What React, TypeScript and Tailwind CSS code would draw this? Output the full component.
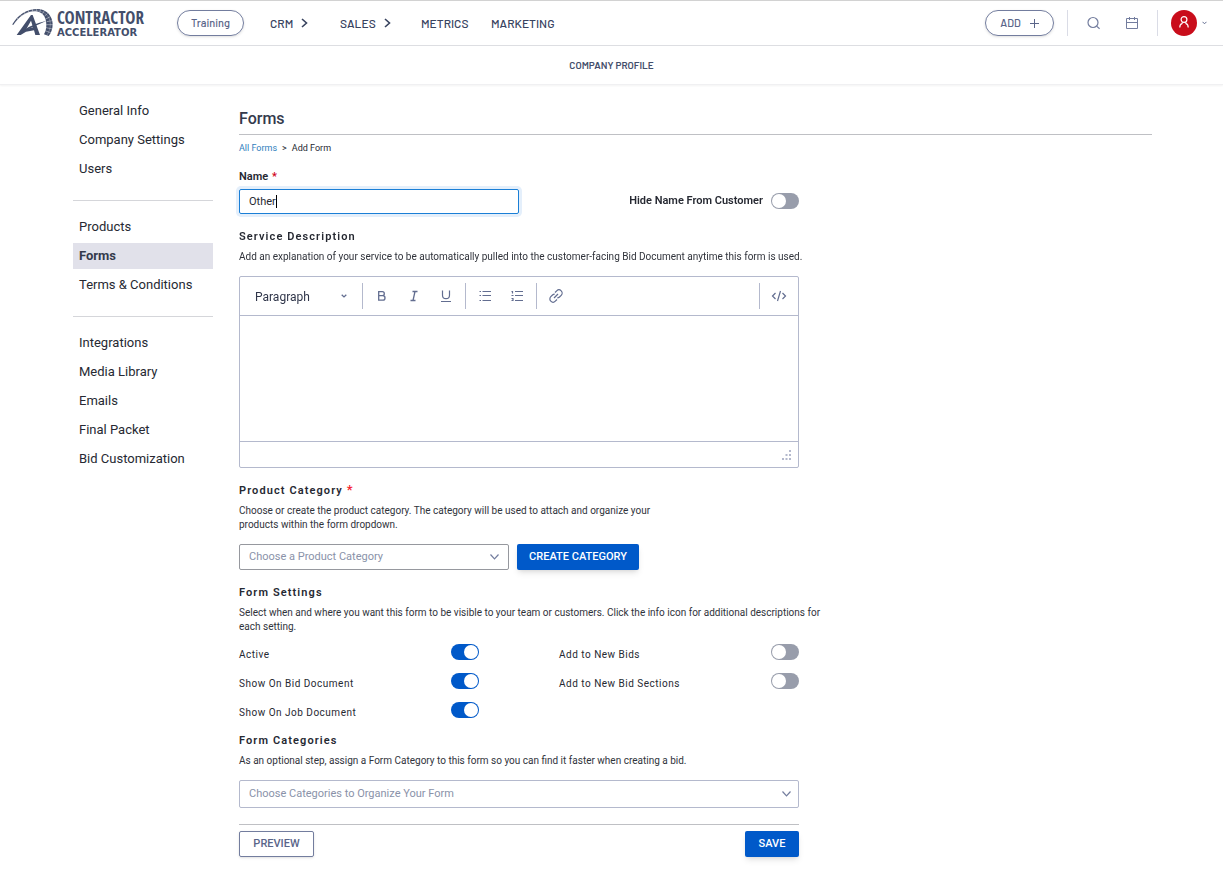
import { useEffect, useRef, useState } from 'react';
import type { ReactNode } from 'react';

function Logo() {
  return (
    <a href="#home" aria-label="Contractor Accelerator" className="flex w-[133px] shrink-0 items-start gap-[3px] text-[#434e6b]">
      <svg width="42" height="29" viewBox="0 0 126 87" fill="none" aria-hidden="true" className="shrink-0">
        <path
          d="M1 49C18 20 45 3 76 3c28 0 46 22 46 45 0 14-4 27-12 36l-14-5c5-9 7-19 7-29 0-25-13-38-31-40C45 8 22 25 3 52Z"
          fill="currentColor"
        />
        <path d="M9 44C25 21 47 8 74 8c25 1 41 18 41 41 0 12-4 24-10 32" stroke="#fff" strokeWidth="2" strokeOpacity=".35" />
        <path
          d="M14 28l5 7M25 19l4 7M36 11l4 8M48 6l3 8M61 3l1 8M74 1v9M86 3l-3 10M97 8l-6 10M107 16l-10 9M115 26l-14 7M121 38l-17 3M124 50h-21M122 63l-20-4M118 75l-19-7"
          stroke="#fff"
          strokeWidth="2.5"
          strokeOpacity=".5"
        />
        <path d="M57 21L14 81h12l16-10 24-4 4 14h14L62 21Zm0 17l6 20-20 5Z" fill="currentColor" fillRule="evenodd" />
        <path d="M22 76C45 56 75 45 104 38C78 50 50 62 22 76Z" fill="currentColor" />
      </svg>
      <span className="flex flex-col">
        <span className="font-['Noto_Sans_ExtraCondensed','Open_Sans_Condensed','Roboto_Condensed','Liberation_Sans_Narrow','Roboto',sans-serif] text-[17px] font-bold leading-5">
          CONTRACTOR
        </span>
        <span className="font-['DejaVu_Sans',sans-serif] text-[10px] leading-[10px] font-bold">ACCELERATOR</span>
      </span>
    </a>
  );
}

function Chevron({ className, d, width, height }: { className?: string; d: string; width: number; height: number }) {
  return (
    <svg
      width={width}
      height={height}
      viewBox={`0 0 ${width} ${height}`}
      fill="none"
      stroke="currentColor"
      className={className}
      aria-hidden="true"
    >
      <path d={d} />
    </svg>
  );
}

function NavItem({ label, menu }: { label: string; menu?: boolean }) {
  return (
    <a href={`#${label.toLowerCase()}`} className="flex items-center gap-2 text-[12px] font-medium text-[#38435f]">
      {label}
      {menu && <Chevron width={7} height={10} d="M1 1l4.5 4L1 9" className="stroke-[1.6]" />}
    </a>
  );
}

function Header() {
  return (
    <header className="flex h-[46px] items-center border-y border-t-[#d2d2d2] border-b-[#dddee2] pr-4 pl-3 font-['Barlow','Roboto',sans-serif]">
      <Logo />
      <button
        type="button"
        className="ml-8 h-[26px] w-[67px] rounded-full border border-[#737d9e] text-[11px] font-medium text-[#5a6589] shadow-sm"
      >
        Training
      </button>
      <nav className="ml-[26px] flex items-center">
        <div className="w-[70px]">
          <NavItem label="CRM" menu />
        </div>
        <div className="w-[81px]">
          <NavItem label="SALES" menu />
        </div>
        <div className="w-[70px]">
          <NavItem label="METRICS" />
        </div>
        <NavItem label="MARKETING" />
      </nav>
      <div className="ml-auto flex items-center">
        <button
          type="button"
          className="flex h-[26px] w-[69px] items-center justify-center gap-[9px] rounded-full border border-[#737d9e] text-[11px] font-medium text-[#5a6589] shadow-sm"
        >
          ADD
          <svg width="9" height="9" viewBox="0 0 9 9" stroke="currentColor" aria-hidden="true">
            <path d="M4.500 0v9M0 4.500h9" />
          </svg>
        </button>
        <span className="ml-[13px] h-[26px] w-px bg-[#dadce6]" />
        <button type="button" aria-label="Search" className="ml-[19px] text-[#737d9e]">
          <svg width="14" height="14" viewBox="0 0 14 14" fill="none" stroke="currentColor" strokeWidth="1.200" aria-hidden="true">
            <circle cx="6" cy="6.500" r="5" />
            <path d="M9.600 10.100l3 2.700" />
          </svg>
        </button>
        <button type="button" aria-label="Calendar" className="ml-[25px] text-[#737d9e]">
          <svg width="12" height="13" viewBox="0 0 12 13" fill="none" stroke="currentColor" aria-hidden="true">
            <path d="M.5 1.500h11v10H.5zM.5 5.500h11M3.500 0v3M8.500 0v3" />
          </svg>
        </button>
        <span className="ml-[19px] h-[26px] w-px bg-[#dadce6]" />
        <button type="button" aria-label="Account" className="ml-[13px] flex items-center gap-[5px] text-[#626d90]">
          <span className="flex size-[26px] items-center justify-center rounded-full bg-[#c90d1b] pb-[2px] text-white">
            <svg width="10" height="12" viewBox="0 0 10 12" fill="none" stroke="currentColor" strokeWidth="1.200" aria-hidden="true">
              <circle cx="5" cy="3.500" r="2.900" />
              <path d="M3.500 6.200L3 7.600Q.8 8.200.8 11.400M6.500 6.200l.5 1.400Q9.200 8.200 9.200 11.400" />
            </svg>
          </span>
          <Chevron width={5} height={4} d="M.5.800l2 2 2-2" />
        </button>
      </div>
    </header>
  );
}

const menuGroups = [
  ['General Info', 'Company Settings', 'Users'],
  ['Products', 'Forms', 'Terms & Conditions'],
  ['Integrations', 'Media Library', 'Emails', 'Final Packet', 'Bid Customization'],
];

function Sidebar() {
  return (
    <nav aria-label="Company profile" className="w-[140px] shrink-0 pt-[13px]">
      {menuGroups.map((group, i) => (
        <ul
          key={group[0]}
          className={`flex flex-col gap-[3px] ${i > 0 ? 'mt-[18px] border-t border-[#d5d6da] pt-[13px]' : ''}`}
        >
          {group.map((item) => (
            <li key={item}>
              <a
                href="#settings"
                className={`block px-[6px] text-[13px] leading-[26px] whitespace-nowrap ${
                  item === 'Forms' ? 'bg-[#e1e1ea] font-bold text-[#343a4c]' : 'text-[#262932]'
                }`}
              >
                {item}
              </a>
            </li>
          ))}
        </ul>
      ))}
    </nav>
  );
}

function Toggle({ id, on }: { id: string; on?: boolean }) {
  return (
    <input
      id={id}
      type="checkbox"
      role="switch"
      defaultChecked={on}
      className="flex h-4 w-7 shrink-0 cursor-pointer appearance-none items-center rounded-full bg-[#989dab] p-px before:size-[14px] before:rounded-full before:bg-white before:content-[''] checked:justify-end checked:bg-[#0059c9]"
    />
  );
}

function Setting({ id, label, on }: { id: string; label: string; on?: boolean }) {
  return (
    <div className="flex h-4 w-60 items-start justify-between">
      <label htmlFor={id} className="pt-[3px] text-[10px] leading-4 tracking-wider">
        {label}
      </label>
      <Toggle id={id} on={on} />
    </div>
  );
}

function SectionTitle({ children }: { children: ReactNode }) {
  return <h2 className="mt-4 text-[11px] leading-[14px] font-semibold tracking-widest text-[#262932]">{children}</h2>;
}

function Hint({ children, className = '' }: { children: ReactNode; className?: string }) {
  return <p className={`mt-[6px] text-[10px] leading-[14px] text-[#30333b] ${className}`}>{children}</p>;
}

function ToolButton({ label, children }: { label: string; children: ReactNode }) {
  return (
    <button type="button" aria-label={label} className="flex h-[26px] w-8 items-center justify-center">
      <svg width="16" height="16" viewBox="0 0 16 16" fill="none" stroke="currentColor" strokeWidth="1.200" aria-hidden="true">
        {children}
      </svg>
    </button>
  );
}

function Editor() {
  return (
    <div className="mt-3 rounded-[2px] border border-[#b4b9cd]">
      <div className="flex h-[39px] items-center border-b border-[#b4b9cd] text-[#626d90]">
        <div className="grid w-[122px] items-center">
          <select
            aria-label="Block format"
            className="col-start-1 row-start-1 h-[26px] w-full appearance-none bg-transparent pt-[2px] pl-[15px] text-[12px] text-[#30364a]"
          >
            <option>Paragraph</option>
          </select>
          <Chevron
            width={6}
            height={4}
            d="M.7.700l2.300 2.200L5.300.700"
            className="pointer-events-none col-start-1 row-start-1 mr-[15px] justify-self-end stroke-[1.3]"
          />
        </div>
        <div className="flex border-l border-[#b4b9cd] px-[3px]">
          <ToolButton label="Bold">
            <path d="M4.700 3.700h3.600a2 2 0 010 4H4.700zM4.700 7.700h4.100a2.200 2.200 0 010 4.400H4.700z" strokeWidth="1.300" />
          </ToolButton>
          <ToolButton label="Italic">
            <path d="M6.500 3.500h5M4.500 12.500h5M9 3.500l-2 9" strokeWidth="1.300" />
          </ToolButton>
          <ToolButton label="Underline">
            <path d="M4.500 2.500v4.700a3.500 3.500 0 007 0V2.500M3 13.500h10" />
          </ToolButton>
        </div>
        <div className="flex border-l border-[#b4b9cd] px-[3px]">
          <ToolButton label="Bulleted list">
            <path d="M5.500 3.500H14M5.500 7.500H14M5.500 12.500H14M2.500 3.500H4M2.500 7.500H4M2.500 12.500H4" />
          </ToolButton>
          <ToolButton label="Numbered list">
            <path d="M6 3.500h8M6 7.500h8M6 12.500h8M2.500 3.500H3.500v2M2.500 7.500H4.500M2.500 10.500h1.500v2H2.500" />
          </ToolButton>
        </div>
        <div className="flex border-l border-[#b4b9cd] px-[3px]">
          <ToolButton label="Link">
            <path d="M6 10l4-4" />
            <path d="M7 4.500l1.700-1.700a3.150 3.150 0 014.500 4.500l-1.700 1.700a3.100 3.100 0 01-2.200.9M9 11.500l-1.700 1.700a3.150 3.150 0 01-4.500-4.500l1.700-1.700a3.100 3.100 0 012.200-.9" />
          </ToolButton>
        </div>
        <div className="ml-auto flex border-l border-[#b4b9cd] px-[3px]">
          <ToolButton label="Source code">
            <path d="M4.500 5l-3 3 3 3M11.500 5l3 3-3 3M9.500 3l-3 10" />
          </ToolButton>
        </div>
      </div>
      <textarea aria-label="Service Description" className="block h-[125px] w-full resize-none px-4 py-3 text-[11px] outline-none" />
      <div className="flex h-[26px] items-center justify-end border-t border-[#b4b9cd] pr-[7px] text-[#b4b9cd]">
        <svg width="9" height="10" viewBox="0 0 9 10" fill="currentColor" aria-hidden="true">
          <path d="M7 0h2v2H7zM3.500 4h2v2h-2zM7 4h2v2H7zM0 8h2v2H0zM3.500 8h2v2h-2zM7 8h2v2H7z" />
        </svg>
      </div>
    </div>
  );
}

function Dropdown({ label, className, arrow }: { label: string; className: string; arrow: string }) {
  return (
    <div className="grid items-center">
      <select
        aria-label={label}
        className={`col-start-1 row-start-1 appearance-none rounded-[2px] border bg-white pl-[9px] text-[11px] text-[#8a92a9] ${className}`}
      >
        <option>{label}</option>
      </select>
      <Chevron
        width={9}
        height={6}
        d="M.5.500l4 4.300 4-4.300"
        className={`pointer-events-none col-start-1 row-start-1 justify-self-end stroke-[1.2] text-[#737d9e] ${arrow}`}
      />
    </div>
  );
}

function NameField() {
  const ref = useRef<HTMLInputElement>(null);
  const [touched, setTouched] = useState(false);
  useEffect(() => {
    const input = ref.current;
    if (input) {
      input.focus();
      input.setSelectionRange(input.value.length, input.value.length);
    }
  }, []);
  return (
    <div className="w-[280px]">
      <label htmlFor="name" className="block text-[11px] leading-[14px] font-semibold">
        Name <span className="ml-px text-[#d0021b]">*</span>
      </label>
      <div className="mt-[5px] grid items-center">
        <input
          ref={ref}
          id="name"
          defaultValue="Other"
          onKeyDown={() => setTouched(true)}
          onPointerDown={() => setTouched(true)}
          className={`col-start-1 row-start-1 h-[25px] w-full rounded-[2px] border border-[#1b7fd6] px-[9px] text-[11px] shadow-[0_0_0_3px_#e4effb] outline-none ${
            touched ? '' : 'caret-transparent'
          }`}
        />
        {!touched && (
          <span aria-hidden="true" className="pointer-events-none col-start-1 row-start-1 ml-[37px] h-[13px] w-px bg-black" />
        )}
      </div>
    </div>
  );
}

export default function App() {
  return (
    <div className="min-h-screen bg-white font-['Roboto',sans-serif] text-[#262932]">
      <Header />
      <div className="flex h-[39px] items-center justify-center border-b border-[#f0f0f2] font-['Barlow','Roboto',sans-serif] text-[10px] font-semibold text-[#434e6b] shadow-xs">
        <a href="#profile">COMPANY PROFILE</a>
      </div>
      <div className="flex gap-[26px] pr-[71px] pl-[73px]">
        <Sidebar />
        <main className="min-w-0 flex-1 pt-6 pb-[18px]">
          <h1 className="border-b border-[#bfc0c4] pb-[5px] text-[16px] leading-5 font-medium text-[#343a4c]">Forms</h1>
          <div className="mt-[6px] flex gap-[5px] text-[9px] leading-[14px]">
            <a href="#forms" className="text-[#2f80bd]">
              All Forms
            </a>
            <span>&gt;</span>
            <span>Add Form</span>
          </div>
          <form className="mt-[15px]" onSubmit={(e) => e.preventDefault()}>
            <div className="flex max-w-[560px] items-end justify-between">
              <NameField />
              <div className="flex h-[26px] items-center gap-2">
                <label htmlFor="hide-name" className="text-[11px] font-semibold">
                  Hide Name From Customer
                </label>
                <Toggle id="hide-name" />
              </div>
            </div>

            <section className="max-w-[590px]">
              <SectionTitle>Service Description</SectionTitle>
              <Hint>
                Add an explanation of your service to be automatically pulled into the customer-facing Bid Document anytime this form is
                used.
              </Hint>
            </section>
            <div className="max-w-[560px]">
              <Editor />
            </div>

            <section className="max-w-[590px]">
              <SectionTitle>
                Product Category <span className="text-[13px] leading-[10px] text-[#f5222d]">*</span>
              </SectionTitle>
              <Hint className="max-w-[420px]">
                Choose or create the product category. The category will be used to attach and organize your products within the form
                dropdown.
              </Hint>
            </section>
            <div className="mt-3 flex gap-2">
              <Dropdown label="Choose a Product Category" className="h-[26px] w-[270px] border-[#96989e]" arrow="mr-[10px]" />
              <button
                type="button"
                className="h-[26px] w-[122px] rounded-[2px] bg-[#0059c9] text-[11px] font-medium text-white shadow-md"
              >
                CREATE CATEGORY
              </button>
            </div>

            <section className="max-w-[590px]">
              <SectionTitle>Form Settings</SectionTitle>
              <Hint>
                Select when and where you want this form to be visible to your team or customers. Click the info icon for additional
                descriptions for each setting.
              </Hint>
            </section>
            <div className="mt-[10px] flex max-w-[560px] justify-between">
              <div className="flex flex-col gap-[13px]">
                <Setting id="active" label="Active" on />
                <Setting id="bid-doc" label="Show On Bid Document" on />
                <Setting id="job-doc" label="Show On Job Document" on />
              </div>
              <div className="flex flex-col gap-[13px]">
                <Setting id="new-bids" label="Add to New Bids" />
                <Setting id="new-sections" label="Add to New Bid Sections" />
              </div>
            </div>

            <section className="max-w-[590px]">
              <SectionTitle>Form Categories</SectionTitle>
              <Hint className="mb-3">
                As an optional step, assign a Form Category to this form so you can find it faster when creating a bid.
              </Hint>
            </section>
            <div className="max-w-[560px]">
              <Dropdown label="Choose Categories to Organize Your Form" className="h-7 w-full border-[#b4b9cd]" arrow="mr-[8px]" />
              <div className="mt-4 flex justify-between border-t border-[#bfc0c4] pt-[6px]">
                <button
                  type="button"
                  className="h-[26px] w-[75px] rounded-[2px] border border-[#737d9e] text-[11px] font-medium text-[#5a6589] shadow-sm"
                >
                  PREVIEW
                </button>
                <button
                  type="submit"
                  className="h-[26px] w-[54px] rounded-[2px] bg-[#0059c9] text-[11px] font-medium text-white shadow-md"
                >
                  SAVE
                </button>
              </div>
            </div>
          </form>
        </main>
      </div>
    </div>
  );
}
